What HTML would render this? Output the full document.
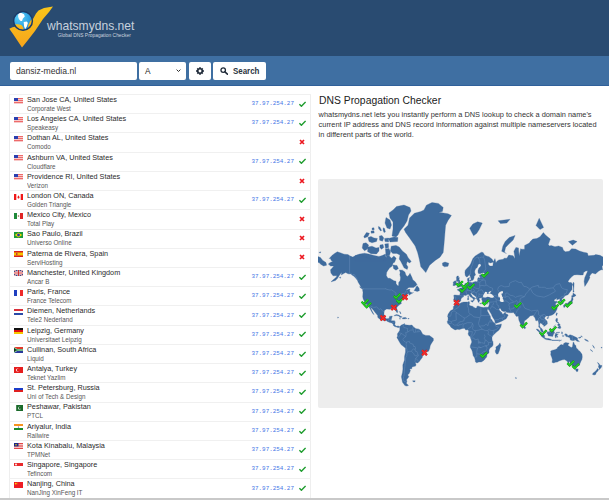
<!DOCTYPE html>
<html><head><meta charset="utf-8"><style>
*{box-sizing:border-box}
html,body{margin:0;padding:0;width:609px;height:500px;overflow:hidden;background:#fff;font-family:"Liberation Sans",sans-serif}
.hdr{position:absolute;left:0;top:0;width:609px;height:56px;background:#294b71}
.band{position:absolute;left:0;top:56px;width:609px;height:30px;background:#3f6fa2;border-bottom:1.5px solid #30609a}
.logo{position:absolute;left:0;top:0}
.brand{position:absolute;left:47.3px;top:19px;font-size:13px;color:rgba(236,241,247,0.82);line-height:14px;white-space:nowrap;transform:scaleX(0.93);transform-origin:0 0}
.tag{position:absolute;left:57.7px;top:32.6px;font-size:4.9px;color:#c9d3df;line-height:6px;white-space:nowrap}
.box{position:absolute;top:62px;height:18px;background:#fff;border-radius:2px}
.inp{left:10px;width:126.5px}
.inp span{position:absolute;left:5.9px;top:4.2px;font-size:8.6px;line-height:10px;color:#333}
.sel{left:139px;width:47px}
.sel span{position:absolute;left:5.9px;top:4.1px;font-size:8.3px;line-height:10px;color:#222}
.gear{left:189px;width:22px}
.srch{left:213px;width:53px}
.srch span{position:absolute;left:20.4px;top:3.6px;font-size:8.3px;font-weight:bold;line-height:10px;color:#2b3440;transform:scaleX(0.955);transform-origin:0 0}
.list{position:absolute;left:9px;top:94px;width:302px;height:410px;border:1px solid #eeeeee;background:#fff}
.row{position:absolute;left:9px;width:302px;height:19.22px;border-top:1px solid #f0f0f0}
.flag{position:absolute;left:5px;top:2.5px;width:9px;height:6px;line-height:0}
.t1{position:absolute;left:17.6px;top:0.9px;font-size:7.4px;line-height:8px;color:#2a2a2a;white-space:nowrap;transform:scaleX(0.982);transform-origin:0 0}
.t2{position:absolute;left:17.6px;top:9.9px;font-size:6.5px;line-height:7px;color:#555;white-space:nowrap;transform:scaleX(0.965);transform-origin:0 0}
.ip{position:absolute;left:242.5px;top:5.2px;font-family:"Liberation Mono",monospace;font-size:5.9px;line-height:7px;color:#4677e6;white-space:nowrap}
.ok{position:absolute;left:290px;top:5.8px;line-height:0}
.no{position:absolute;left:290.3px;top:5.7px;line-height:0}
.bot{position:absolute;left:0;top:498px;width:609px;height:2px;background:#c9c9c9}
h1{position:absolute;left:318.6px;top:95.4px;margin:0;font-weight:normal;font-size:10px;line-height:12px;color:#222;white-space:nowrap;transform:scaleX(1.036);transform-origin:0 0}
.para{position:absolute;left:318.6px;top:109.6px;width:290px;font-size:7.4px;line-height:10.1px;color:#333}
.para div{white-space:nowrap}
.map{position:absolute;left:318px;top:179px;width:285px;height:228.5px;background:#ededed;border-radius:2px;overflow:hidden}
</style></head><body>
<div class="hdr"></div>
<svg class="logo" width="60" height="52" viewBox="0 0 60 52">
<defs><linearGradient id="yg" x1="0" y1="0" x2="0" y2="1"><stop offset="0" stop-color="#f9c51a"/><stop offset="1" stop-color="#f7a51c"/></linearGradient>
<radialGradient id="bg" cx="0.3" cy="0.3" r="0.9"><stop offset="0" stop-color="#5fd0f8"/><stop offset="0.6" stop-color="#2ea3e4"/><stop offset="1" stop-color="#1a6fc0"/></radialGradient></defs>
<path d="M9.3 28.8L12.5 27.2 16 26.5 23 28 30 25 33 19 36 13.5 38.5 10.5 44 8 53 6.5 49 12 43 19 35 31 28 40 22 47.5 17 40 13 34Z" fill="url(#yg)"/>
<circle cx="23" cy="20.9" r="9.3" fill="url(#bg)"/>
<path d="M18.4 13.6L21 12.8 24 14.2 24.8 16.4 22.9 18.6 22 20.9 20.6 20.9 19 19.2 18.1 16.4Z" fill="#fff"/>
<path d="M23.7 22L26.8 21.4 27.9 23.1 26.8 26.5 25.1 29.3 24 26Z" fill="#fff"/>
<path d="M14.2 24.6C16.5 23.9 19.3 23.9 21.3 25.1 22.8 26.1 23.5 27.9 23.7 30 19.5 30 15.8 27.8 14.2 24.6Z" fill="url(#yg)"/>
<path d="M32.4 18.2L32.3 22 30.6 25.6 27.8 28 28.4 24.8 30.2 21.3Z" fill="url(#yg)"/>
<circle cx="23" cy="20.9" r="9.4" fill="none" stroke="#1b3a68" stroke-width="1.5"/>
</svg>
<div class="brand">whatsmydns.net</div>
<div class="tag">Global DNS Propagation Checker</div>
<div class="band"></div>
<div class="box inp"><span>dansiz-media.nl</span></div>
<div class="box sel"><span>A</span><svg style="position:absolute;left:37px;top:7.3px" width="5" height="3" viewBox="0 0 5 3"><path d="M0.6 0.6L2.5 2.5 4.4 0.6" fill="none" stroke="#222" stroke-width="0.95"/></svg></div>
<div class="box gear"><svg style="position:absolute;left:6.8px;top:5.2px" width="8" height="8" viewBox="-8 -8 16 16"><g fill="#1f2a38"><rect x="-1.8" y="-7.6" width="3.6" height="15.2" rx="0.6"/><rect x="-1.8" y="-7.6" width="3.6" height="15.2" rx="0.6" transform="rotate(45)"/><rect x="-1.8" y="-7.6" width="3.6" height="15.2" rx="0.6" transform="rotate(90)"/><rect x="-1.8" y="-7.6" width="3.6" height="15.2" rx="0.6" transform="rotate(135)"/><circle r="5.4"/></g><circle r="2.9" fill="#fff"/></svg></div>
<div class="box srch"><svg style="position:absolute;left:6.6px;top:5.4px" width="8.8" height="7.6" viewBox="0 0 17.6 15.2"><circle cx="6.4" cy="6.2" r="4.5" fill="none" stroke="#1f2a38" stroke-width="2.6"/><path d="M9.9 9.7L14.8 14.3" stroke="#1f2a38" stroke-width="3" stroke-linecap="round"/></svg><span>Search</span></div>
<div class="list"></div>
<div class="row" style="top:94.00px"><div class="flag"><svg class="fl" width="9" height="6" viewBox="0 0 9 6"><rect width="9" height="6" fill="#ee6a6a"/><rect y="1" width="9" height="1" fill="#f7caca"/><rect y="3" width="9" height="1" fill="#f7caca"/><rect y="5" width="9" height="1" fill="#f7caca"/><rect width="4" height="3" fill="#2a3fb0"/></svg></div><div class="t1">San Jose CA, United States</div><div class="t2">Corporate West</div><div class="ip">37.97.254.27</div><div class="ok"><svg class="ic" width="7" height="6" viewBox="0 0 7 6"><path d="M0.4 3.2L2.4 5.2 6.6 0.9" fill="none" stroke="#1f9d2f" stroke-width="1.5"/></svg></div></div><div class="row" style="top:113.22px"><div class="flag"><svg class="fl" width="9" height="6" viewBox="0 0 9 6"><rect width="9" height="6" fill="#ee6a6a"/><rect y="1" width="9" height="1" fill="#f7caca"/><rect y="3" width="9" height="1" fill="#f7caca"/><rect y="5" width="9" height="1" fill="#f7caca"/><rect width="4" height="3" fill="#2a3fb0"/></svg></div><div class="t1">Los Angeles CA, United States</div><div class="t2">Speakeasy</div><div class="ip">37.97.254.27</div><div class="ok"><svg class="ic" width="7" height="6" viewBox="0 0 7 6"><path d="M0.4 3.2L2.4 5.2 6.6 0.9" fill="none" stroke="#1f9d2f" stroke-width="1.5"/></svg></div></div><div class="row" style="top:132.44px"><div class="flag"><svg class="fl" width="9" height="6" viewBox="0 0 9 6"><rect width="9" height="6" fill="#ee6a6a"/><rect y="1" width="9" height="1" fill="#f7caca"/><rect y="3" width="9" height="1" fill="#f7caca"/><rect y="5" width="9" height="1" fill="#f7caca"/><rect width="4" height="3" fill="#2a3fb0"/></svg></div><div class="t1">Dothan AL, United States</div><div class="t2">Comodo</div><div class="no"><svg class="ic" width="6" height="6" viewBox="0 0 6 6"><path d="M1 1L5 5M5 1L1 5" fill="none" stroke="#ec1820" stroke-width="1.7"/></svg></div></div><div class="row" style="top:151.66px"><div class="flag"><svg class="fl" width="9" height="6" viewBox="0 0 9 6"><rect width="9" height="6" fill="#ee6a6a"/><rect y="1" width="9" height="1" fill="#f7caca"/><rect y="3" width="9" height="1" fill="#f7caca"/><rect y="5" width="9" height="1" fill="#f7caca"/><rect width="4" height="3" fill="#2a3fb0"/></svg></div><div class="t1">Ashburn VA, United States</div><div class="t2">Cloudflare</div><div class="ip">37.97.254.27</div><div class="ok"><svg class="ic" width="7" height="6" viewBox="0 0 7 6"><path d="M0.4 3.2L2.4 5.2 6.6 0.9" fill="none" stroke="#1f9d2f" stroke-width="1.5"/></svg></div></div><div class="row" style="top:170.88px"><div class="flag"><svg class="fl" width="9" height="6" viewBox="0 0 9 6"><rect width="9" height="6" fill="#ee6a6a"/><rect y="1" width="9" height="1" fill="#f7caca"/><rect y="3" width="9" height="1" fill="#f7caca"/><rect y="5" width="9" height="1" fill="#f7caca"/><rect width="4" height="3" fill="#2a3fb0"/></svg></div><div class="t1">Providence RI, United States</div><div class="t2">Verizon</div><div class="no"><svg class="ic" width="6" height="6" viewBox="0 0 6 6"><path d="M1 1L5 5M5 1L1 5" fill="none" stroke="#ec1820" stroke-width="1.7"/></svg></div></div><div class="row" style="top:190.10px"><div class="flag"><svg class="fl" width="9" height="6" viewBox="0 0 9 6"><rect width="9" height="6" fill="#fff"/><rect width="2.3" height="6" fill="#f01818"/><rect x="6.7" width="2.3" height="6" fill="#f01818"/><path d="M4.5 1.2L5.6 3.2 5 4.6 4 4.6 3.4 3.2Z" fill="#f01818"/></svg></div><div class="t1">London ON, Canada</div><div class="t2">Golden Triangle</div><div class="ip">37.97.254.27</div><div class="ok"><svg class="ic" width="7" height="6" viewBox="0 0 7 6"><path d="M0.4 3.2L2.4 5.2 6.6 0.9" fill="none" stroke="#1f9d2f" stroke-width="1.5"/></svg></div></div><div class="row" style="top:209.32px"><div class="flag"><svg class="fl" width="9" height="6" viewBox="0 0 9 6"><rect width="3" height="6" fill="#1f8a3a"/><rect x="3" width="3" height="6" fill="#fff"/><rect x="6" width="3" height="6" fill="#e02525"/><circle cx="4.5" cy="3" r="0.8" fill="#8a6a3a"/></svg></div><div class="t1">Mexico City, Mexico</div><div class="t2">Total Play</div><div class="no"><svg class="ic" width="6" height="6" viewBox="0 0 6 6"><path d="M1 1L5 5M5 1L1 5" fill="none" stroke="#ec1820" stroke-width="1.7"/></svg></div></div><div class="row" style="top:228.54px"><div class="flag"><svg class="fl" width="9" height="6" viewBox="0 0 9 6"><rect width="9" height="6" fill="#1c9a3a"/><path d="M4.5 0.6L8.2 3 4.5 5.4 0.8 3Z" fill="#f5d800"/><circle cx="4.5" cy="3" r="1.4" fill="#2233aa"/></svg></div><div class="t1">Sao Paulo, Brazil</div><div class="t2">Universo Online</div><div class="no"><svg class="ic" width="6" height="6" viewBox="0 0 6 6"><path d="M1 1L5 5M5 1L1 5" fill="none" stroke="#ec1820" stroke-width="1.7"/></svg></div></div><div class="row" style="top:247.76px"><div class="flag"><svg class="fl" width="9" height="6" viewBox="0 0 9 6"><rect width="9" height="6" fill="#d81e1e"/><rect y="1.5" width="9" height="3" fill="#f7c400"/><rect x="2" y="2" width="1.5" height="2" fill="#c04040"/></svg></div><div class="t1">Paterna de Rivera, Spain</div><div class="t2">ServiHosting</div><div class="no"><svg class="ic" width="6" height="6" viewBox="0 0 6 6"><path d="M1 1L5 5M5 1L1 5" fill="none" stroke="#ec1820" stroke-width="1.7"/></svg></div></div><div class="row" style="top:266.98px"><div class="flag"><svg class="fl" width="9" height="6" viewBox="0 0 9 6"><rect width="9" height="6" fill="#24347a"/><path d="M0 0L9 6M9 0L0 6" stroke="#fff" stroke-width="1.2"/><path d="M0 0L9 6M9 0L0 6" stroke="#d03030" stroke-width="0.5"/><path d="M4.5 0V6M0 3H9" stroke="#fff" stroke-width="2"/><path d="M4.5 0V6M0 3H9" stroke="#d03030" stroke-width="1.1"/></svg></div><div class="t1">Manchester, United Kingdom</div><div class="t2">Ancar B</div><div class="ip">37.97.254.27</div><div class="ok"><svg class="ic" width="7" height="6" viewBox="0 0 7 6"><path d="M0.4 3.2L2.4 5.2 6.6 0.9" fill="none" stroke="#1f9d2f" stroke-width="1.5"/></svg></div></div><div class="row" style="top:286.20px"><div class="flag"><svg class="fl" width="9" height="6" viewBox="0 0 9 6"><rect width="3" height="6" fill="#1f3fc0"/><rect x="3" width="3" height="6" fill="#fff"/><rect x="6" width="3" height="6" fill="#ee2a2a"/></svg></div><div class="t1">Paris, France</div><div class="t2">France Telecom</div><div class="ip">37.97.254.27</div><div class="ok"><svg class="ic" width="7" height="6" viewBox="0 0 7 6"><path d="M0.4 3.2L2.4 5.2 6.6 0.9" fill="none" stroke="#1f9d2f" stroke-width="1.5"/></svg></div></div><div class="row" style="top:305.42px"><div class="flag"><svg class="fl" width="9" height="6" viewBox="0 0 9 6"><rect width="9" height="2" fill="#d8303a"/><rect y="2" width="9" height="2" fill="#fff"/><rect y="4" width="9" height="2" fill="#2a4aa8"/></svg></div><div class="t1">Diemen, Netherlands</div><div class="t2">Tele2 Nederland</div><div class="ip">37.97.254.27</div><div class="ok"><svg class="ic" width="7" height="6" viewBox="0 0 7 6"><path d="M0.4 3.2L2.4 5.2 6.6 0.9" fill="none" stroke="#1f9d2f" stroke-width="1.5"/></svg></div></div><div class="row" style="top:324.64px"><div class="flag"><svg class="fl" width="9" height="6" viewBox="0 0 9 6"><rect width="9" height="2" fill="#111"/><rect y="2" width="9" height="2" fill="#e01010"/><rect y="4" width="9" height="2" fill="#f8c800"/></svg></div><div class="t1">Leipzig, Germany</div><div class="t2">Universitaet Leipzig</div><div class="ip">37.97.254.27</div><div class="ok"><svg class="ic" width="7" height="6" viewBox="0 0 7 6"><path d="M0.4 3.2L2.4 5.2 6.6 0.9" fill="none" stroke="#1f9d2f" stroke-width="1.5"/></svg></div></div><div class="row" style="top:343.86px"><div class="flag"><svg class="fl" width="9" height="6" viewBox="0 0 9 6"><rect width="9" height="3" fill="#e03a2a"/><rect y="3" width="9" height="3" fill="#2a3a9a"/><path d="M0 0L4.5 3 0 6Z" fill="#fff"/><rect x="2" y="2" width="7" height="2" fill="#fff"/><path d="M0 0.6L3.8 3 0 5.4Z" fill="#1a8a3a"/><rect x="3" y="2.4" width="6" height="1.2" fill="#1a8a3a"/><path d="M0 1.6L2.3 3 0 4.4Z" fill="#222"/></svg></div><div class="t1">Cullinan, South Africa</div><div class="t2">Liquid</div><div class="ip">37.97.254.27</div><div class="ok"><svg class="ic" width="7" height="6" viewBox="0 0 7 6"><path d="M0.4 3.2L2.4 5.2 6.6 0.9" fill="none" stroke="#1f9d2f" stroke-width="1.5"/></svg></div></div><div class="row" style="top:363.08px"><div class="flag"><svg class="fl" width="9" height="6" viewBox="0 0 9 6"><rect width="9" height="6" fill="#e61e1e"/><circle cx="3.6" cy="3" r="1.6" fill="#fff"/><circle cx="4.1" cy="3" r="1.3" fill="#e61e1e"/></svg></div><div class="t1">Antalya, Turkey</div><div class="t2">Teknet Yazlim</div><div class="ip">37.97.254.27</div><div class="ok"><svg class="ic" width="7" height="6" viewBox="0 0 7 6"><path d="M0.4 3.2L2.4 5.2 6.6 0.9" fill="none" stroke="#1f9d2f" stroke-width="1.5"/></svg></div></div><div class="row" style="top:382.30px"><div class="flag"><svg class="fl" width="9" height="6" viewBox="0 0 9 6"><rect width="9" height="2" fill="#fff"/><rect y="2" width="9" height="2" fill="#1c3cc8"/><rect y="4" width="9" height="2" fill="#e02020"/></svg></div><div class="t1">St. Petersburg, Russia</div><div class="t2">Uni of Tech &amp; Design</div><div class="ip">37.97.254.27</div><div class="ok"><svg class="ic" width="7" height="6" viewBox="0 0 7 6"><path d="M0.4 3.2L2.4 5.2 6.6 0.9" fill="none" stroke="#1f9d2f" stroke-width="1.5"/></svg></div></div><div class="row" style="top:401.52px"><div class="flag"><svg class="fl" width="9" height="6" viewBox="0 0 9 6"><rect width="9" height="6" fill="#1a6a2a"/><rect width="2.2" height="6" fill="#fff"/><circle cx="5.5" cy="3" r="1.5" fill="#fff"/><circle cx="5.9" cy="2.7" r="1.3" fill="#1a6a2a"/></svg></div><div class="t1">Peshawar, Pakistan</div><div class="t2">PTCL</div><div class="ip">37.97.254.27</div><div class="ok"><svg class="ic" width="7" height="6" viewBox="0 0 7 6"><path d="M0.4 3.2L2.4 5.2 6.6 0.9" fill="none" stroke="#1f9d2f" stroke-width="1.5"/></svg></div></div><div class="row" style="top:420.74px"><div class="flag"><svg class="fl" width="9" height="6" viewBox="0 0 9 6"><rect width="9" height="2" fill="#f7931e"/><rect y="2" width="9" height="2" fill="#fff"/><rect y="4" width="9" height="2" fill="#1a8a2a"/><circle cx="4.5" cy="3" r="0.6" fill="#2a2a8a"/></svg></div><div class="t1">Ariyalur, India</div><div class="t2">Railwire</div><div class="ip">37.97.254.27</div><div class="ok"><svg class="ic" width="7" height="6" viewBox="0 0 7 6"><path d="M0.4 3.2L2.4 5.2 6.6 0.9" fill="none" stroke="#1f9d2f" stroke-width="1.5"/></svg></div></div><div class="row" style="top:439.96px"><div class="flag"><svg class="fl" width="9" height="6" viewBox="0 0 9 6"><rect width="9" height="6" fill="#fff"/><rect y="0" width="9" height="0.9" fill="#dd3333"/><rect y="1.7" width="9" height="0.9" fill="#dd3333"/><rect y="3.4" width="9" height="0.9" fill="#dd3333"/><rect y="5.1" width="9" height="0.9" fill="#dd3333"/><rect width="4.5" height="3.4" fill="#1a2a8a"/><circle cx="2" cy="1.7" r="0.8" fill="#f5d000"/></svg></div><div class="t1">Kota Kinabalu, Malaysia</div><div class="t2">TPMNet</div><div class="ip">37.97.254.27</div><div class="ok"><svg class="ic" width="7" height="6" viewBox="0 0 7 6"><path d="M0.4 3.2L2.4 5.2 6.6 0.9" fill="none" stroke="#1f9d2f" stroke-width="1.5"/></svg></div></div><div class="row" style="top:459.18px"><div class="flag"><svg class="fl" width="9" height="6" viewBox="0 0 9 6"><rect width="9" height="3" fill="#e8282a"/><rect y="3" width="9" height="3" fill="#fff"/><circle cx="2" cy="1.5" r="0.9" fill="#fff"/></svg></div><div class="t1">Singapore, Singapore</div><div class="t2">Tefincom</div><div class="ip">37.97.254.27</div><div class="ok"><svg class="ic" width="7" height="6" viewBox="0 0 7 6"><path d="M0.4 3.2L2.4 5.2 6.6 0.9" fill="none" stroke="#1f9d2f" stroke-width="1.5"/></svg></div></div><div class="row" style="top:478.40px"><div class="flag"><svg class="fl" width="9" height="6" viewBox="0 0 9 6"><rect width="9" height="6" fill="#ee1c25"/><circle cx="1.8" cy="1.6" r="0.9" fill="#ffde00"/><circle cx="3.5" cy="0.9" r="0.3" fill="#ffde00"/><circle cx="3.9" cy="2" r="0.3" fill="#ffde00"/></svg></div><div class="t1">Nanjing, China</div><div class="t2">NanJing XinFeng IT</div><div class="ip">37.97.254.27</div><div class="ok"><svg class="ic" width="7" height="6" viewBox="0 0 7 6"><path d="M0.4 3.2L2.4 5.2 6.6 0.9" fill="none" stroke="#1f9d2f" stroke-width="1.5"/></svg></div></div>
<h1>DNS Propagation Checker</h1>
<div class="para"><div>whatsmydns.net lets you instantly perform a DNS lookup to check a domain name's</div><div>current IP address and DNS record information against multiple nameservers located</div><div>in different parts of the world.</div></div>
<div class="map"><svg width="285" height="229" viewBox="0 0 285 229" style="position:absolute;left:0;top:0"><path d="M10.3 85.1 11.9 83.7 13.4 83.1 15.0 82.5 13.7 82.1 12.3 79.6 11.2 79.5 14.2 76.3 16.6 74.4 19.3 72.8 22.9 74.0 26.1 75.2 30.0 75.6 31.6 76.8 34.8 78.1 37.1 76.8 41.1 75.9 44.2 77.0 48.2 78.1 52.1 79.6 56.1 80.3 60.1 79.2 65.6 80.7 68.3 78.3 68.7 71.5 70.3 75.9 73.5 79.2 75.9 77.0 78.2 79.2 76.6 83.3 75.1 83.9 74.3 87.1 71.5 88.9 68.7 93.2 68.3 96.4 69.9 99.3 71.9 99.3 75.9 101.7 78.0 102.2 78.1 104.8 79.8 106.8 80.6 106.8 80.7 103.5 82.2 101.5 82.5 98.6 81.8 95.6 82.2 93.5 81.4 90.9 84.5 91.2 86.9 93.0 88.1 96.4 89.7 97.4 91.6 95.1 92.0 94.3 94.0 98.6 94.8 100.8 97.2 102.8 99.0 105.5 98.0 106.8 95.6 108.4 90.9 108.4 87.7 111.1 92.0 110.1 91.6 111.7 92.0 113.0 94.8 113.9 95.6 113.4 92.8 115.1 90.9 116.2 90.9 114.5 89.7 115.1 87.7 115.9 87.2 117.1 87.7 118.0 86.5 118.5 84.5 119.2 84.5 120.4 83.4 121.4 83.0 122.9 83.4 124.6 82.2 125.3 80.6 126.6 79.0 127.9 78.6 129.5 79.4 131.3 79.8 132.7 79.4 133.8 78.6 133.3 77.7 131.6 77.0 130.0 75.9 129.8 73.5 129.1 72.3 130.2 71.1 130.3 68.7 129.9 66.4 131.5 66.0 133.6 66.0 136.2 67.2 138.7 68.3 139.8 71.1 139.4 71.5 137.4 74.3 137.0 73.6 139.5 73.1 141.8 76.6 141.8 77.2 143.2 76.8 145.7 78.2 147.3 80.2 146.9 81.8 147.7 81.0 148.5 79.8 148.6 78.5 148.1 77.0 147.7 75.3 146.5 75.1 145.3 73.9 144.0 71.9 143.5 69.9 142.8 68.3 141.6 66.4 141.8 64.0 140.8 61.2 139.7 59.7 138.3 59.7 136.6 58.5 134.9 56.9 133.3 55.7 131.5 53.9 129.5 52.4 128.1 52.9 129.5 54.5 132.7 56.1 135.7 54.5 134.2 52.9 131.3 52.1 129.7 50.6 127.2 49.4 125.8 47.7 125.2 46.7 123.3 46.2 122.1 45.2 120.1 44.7 117.8 45.0 113.4 44.5 110.6 45.8 110.5 45.0 109.3 42.7 107.7 41.9 106.1 40.3 103.5 39.5 101.5 37.9 99.3 35.6 97.1 32.8 95.1 30.0 94.8 27.7 93.5 26.1 94.3 23.3 95.9 23.6 93.2 21.3 96.4 19.4 99.6 17.4 101.5 15.0 102.2 13.0 102.8 15.8 100.3 18.2 98.2 19.0 96.7 15.0 96.8 12.9 94.0 12.5 90.7 13.8 89.6 15.8 87.1 12.6 87.1ZM96.0 111.5 99.2 112.5 101.4 111.7 101.1 109.3 99.2 106.8 98.1 108.0 97.2 109.9ZM151.7 49.3 154.9 45.0 159.6 42.8 164.3 44.1 161.2 50.5 158.8 54.3 155.6 56.8 153.7 53.2ZM81.8 147.6 83.4 146.1 85.3 145.3 86.5 144.6 86.9 145.7 89.3 146.1 91.6 146.3 94.0 146.0 95.2 147.7 98.0 149.7 100.3 149.9 102.3 151.0 103.5 153.0 104.7 155.2 107.8 156.4 111.4 156.6 113.8 158.2 115.4 159.5 115.4 161.5 113.4 164.4 112.2 166.8 111.8 169.3 110.6 172.2 108.2 173.1 105.9 174.4 104.7 176.6 104.3 178.4 102.7 180.6 101.1 182.8 99.6 183.9 97.2 183.5 98.0 185.4 97.6 187.1 94.0 187.9 93.8 189.8 91.6 190.0 92.4 191.6 91.3 194.3 89.7 196.0 90.9 197.7 88.5 200.8 89.0 203.0 88.1 204.0 90.5 206.4 88.9 207.1 86.9 206.6 84.5 203.3 83.4 197.7 84.5 193.2 84.9 190.0 84.8 185.9 86.5 181.1 86.5 177.5 87.5 173.1 87.5 169.3 86.1 168.0 83.0 165.6 81.0 162.3 79.8 159.9 78.9 158.8 79.6 157.0 79.4 155.2 79.8 154.0 80.6 153.2 81.8 151.2 81.8 148.9ZM138.6 123.9 139.4 123.2 141.4 123.2 142.4 122.3 143.0 121.1 142.8 120.4 143.7 118.8 145.5 117.8 145.4 116.6 146.6 116.3 148.1 116.6 148.9 115.8 150.0 115.2 151.1 115.7 151.7 117.2 152.7 118.1 154.1 118.8 155.3 119.9 155.6 121.2 155.4 121.9 155.8 121.9 156.5 120.6 156.3 119.5 157.6 119.8 157.2 119.1 155.6 118.3 154.1 117.2 153.7 116.1 152.7 115.1 152.8 114.1 153.8 113.7 153.7 114.5 155.0 115.4 156.0 116.3 157.6 117.4 158.3 118.0 158.3 119.6 159.0 120.4 159.7 121.6 160.1 123.1 160.9 123.4 161.3 121.9 162.0 121.7 160.9 119.7 161.9 119.1 163.7 119.0 163.9 119.7 163.7 120.5 164.2 121.4 164.6 122.9 165.4 123.2 167.2 123.2 168.7 123.8 170.3 123.1 171.4 123.7 171.3 124.9 171.0 126.3 170.6 127.4 170.1 128.3 170.6 130.0 171.8 132.7 173.4 135.3 174.0 137.0 175.2 139.1 176.6 141.2 177.1 143.6 177.4 144.3 178.6 144.2 181.4 143.2 184.2 141.9 186.7 140.6 187.8 139.9 188.7 139.1 189.2 137.8 190.2 136.2 189.4 135.2 188.0 134.9 187.5 134.1 187.5 132.9 186.8 133.6 185.7 134.7 184.1 134.9 183.7 133.6 183.3 133.1 182.9 133.8 182.7 132.6 181.4 131.3 180.9 129.8 181.6 129.5 182.5 129.4 183.5 131.4 185.3 132.4 186.8 132.5 188.0 132.2 188.3 133.3 190.0 133.6 191.7 133.8 193.6 133.7 195.6 133.6 196.2 134.6 197.4 135.7 198.3 136.0 197.5 136.4 198.5 137.5 200.3 137.0 200.5 138.7 200.9 141.2 201.8 143.2 202.6 145.3 203.4 147.3 204.2 148.0 204.9 147.3 205.6 146.2 206.1 144.4 206.4 142.0 208.0 140.8 209.8 139.3 211.3 138.0 211.7 137.0 213.3 136.7 214.5 136.4 215.5 136.2 215.9 137.6 216.9 138.7 217.5 140.4 217.7 141.6 218.4 141.8 220.0 141.2 220.3 142.4 220.8 144.0 220.8 146.5 220.7 148.1 222.2 149.3 222.6 151.2 223.0 152.2 224.8 153.4 225.3 153.1 224.7 151.0 223.7 149.5 222.3 148.5 221.6 147.0 221.4 146.0 222.0 144.4 222.1 143.7 222.8 144.3 224.0 144.7 224.6 145.8 225.8 146.2 225.8 147.4 227.1 146.8 227.9 146.1 229.3 145.1 229.3 143.6 229.0 142.0 227.5 140.8 226.5 139.3 227.1 138.1 228.2 137.0 229.5 137.0 230.3 137.8 230.7 137.0 232.7 136.4 234.2 135.9 235.8 134.9 237.4 133.3 238.2 131.8 239.1 130.0 239.2 128.6 238.4 127.1 237.4 125.3 238.0 123.9 239.8 122.9 238.6 122.2 236.9 122.4 236.2 121.4 235.9 120.9 237.0 120.4 239.0 119.0 238.7 120.9 239.6 120.4 241.2 120.0 242.0 120.5 241.6 121.9 242.7 122.4 242.9 124.9 243.7 125.2 245.1 124.6 245.3 123.1 244.5 121.5 243.7 120.1 245.5 118.8 246.3 117.5 247.7 116.5 250.0 115.7 252.4 112.5 254.0 110.5 254.0 107.4 254.7 105.2 253.2 103.5 251.2 103.5 249.9 102.4 251.6 100.1 254.0 97.4 256.0 95.9 259.1 95.7 262.7 96.0 265.1 95.9 265.6 93.5 267.8 91.9 269.6 91.7 269.2 93.2 266.8 98.6 266.1 102.2 266.8 107.4 268.1 105.4 269.4 103.5 271.0 100.5 272.0 98.2 271.4 97.6 273.1 95.0 274.4 94.0 277.5 95.0 279.3 93.2 280.9 91.9 283.2 90.7 284.6 91.0 284.0 87.0 287.6 85.3 293.1 84.3 291.5 82.3 289.1 81.3 286.8 78.6 285.2 78.1 282.0 76.3 277.7 75.6 276.1 76.3 270.2 76.8 269.4 74.0 265.5 73.2 261.5 72.0 257.5 70.0 253.6 69.7 251.2 72.3 247.3 72.8 245.3 71.0 244.5 68.4 240.6 67.0 237.0 67.8 233.1 66.4 231.5 67.0 230.3 65.6 232.3 60.1 227.5 56.1 225.4 53.6 222.0 57.8 218.8 59.5 214.9 60.1 212.5 62.3 211.3 64.1 206.6 66.4 206.6 70.2 203.8 70.2 202.6 69.7 201.1 77.0 200.5 68.9 197.9 68.4 195.9 72.3 197.1 79.8 195.1 76.8 190.8 76.1 188.8 79.2 186.1 79.2 185.3 80.3 180.9 80.9 179.3 81.9 177.9 83.7 177.0 79.6 175.4 82.7 174.8 87.0 171.8 87.1 170.3 85.3 170.4 83.3 172.6 83.9 175.5 82.9 174.2 80.3 171.0 77.7 169.1 77.2 166.7 76.3 165.1 73.5 163.3 73.2 159.6 75.4 157.2 77.0 154.9 79.6 153.7 82.3 152.7 84.7 151.3 87.1 149.3 89.1 147.3 91.2 146.9 93.2 147.1 95.6 147.5 97.0 148.5 97.9 149.5 97.7 150.7 96.4 151.4 95.0 151.7 96.4 152.3 97.6 153.0 100.1 153.2 101.6 154.3 101.5 155.6 100.3 156.1 98.5 156.1 97.3 157.6 95.9 156.8 93.8 156.7 91.9 157.6 89.8 159.2 88.4 160.4 85.3 162.0 84.7 163.1 86.0 162.8 87.1 160.8 89.3 160.0 91.5 160.0 93.2 160.5 94.5 162.0 94.8 163.9 94.0 165.5 93.8 166.9 95.0 165.3 95.6 163.5 95.6 161.6 96.0 161.6 97.4 162.2 98.2 162.1 99.2 160.1 98.7 159.6 100.1 159.7 101.9 158.7 102.8 157.6 102.6 155.6 103.1 154.2 103.7 152.5 103.3 151.7 103.5 151.1 102.8 151.1 100.5 151.4 98.2 150.5 99.2 149.8 99.2 149.4 100.1 149.5 101.5 149.8 102.3 150.0 103.5 149.5 104.2 148.5 104.3 146.9 104.6 146.7 105.5 145.8 106.8 145.0 107.3 144.3 107.5 144.3 108.4 143.2 109.0 142.0 109.1 141.5 109.0 141.8 110.4 140.6 110.1 139.3 110.6 139.6 111.3 141.0 112.0 142.1 113.2 142.1 115.1 141.6 116.3 139.8 116.3 136.7 115.9 135.7 116.5 136.0 118.0 136.0 119.4 135.5 121.1 136.0 121.4 136.0 122.9 137.1 122.7 138.0 123.1ZM138.3 124.1 141.3 124.8 143.8 123.4 145.8 123.1 149.7 123.0 150.9 122.6 151.7 123.0 151.2 123.9 151.8 124.7 151.1 125.6 152.1 126.7 153.3 126.9 155.1 127.5 155.5 128.3 158.0 129.3 158.9 128.6 158.8 127.6 160.0 126.9 161.3 127.5 162.9 128.1 165.5 128.6 167.1 128.2 168.5 128.3 170.1 128.3 170.6 130.0 170.1 131.3 168.8 129.6 169.5 132.2 171.0 134.9 172.4 137.4 172.6 139.5 173.6 140.4 174.4 142.0 175.6 143.2 177.2 144.4 177.1 145.3 178.2 146.1 179.7 145.8 181.3 145.5 183.4 144.9 183.3 146.1 182.9 148.1 181.7 150.0 180.5 151.6 178.2 153.2 176.0 155.6 174.8 156.6 174.0 158.2 174.0 159.9 174.2 161.5 175.0 162.7 175.1 166.0 174.2 167.6 172.1 168.9 171.0 171.0 171.0 172.6 171.0 173.9 169.1 175.2 169.0 176.1 168.7 178.1 167.5 179.3 166.7 180.5 165.1 181.9 163.3 183.0 160.8 183.0 158.8 183.8 157.5 183.0 157.2 181.1 156.6 178.8 155.1 176.6 154.5 173.1 153.8 171.0 152.3 168.4 152.3 166.8 152.9 165.2 153.8 163.1 153.3 161.1 152.6 159.1 152.5 158.0 150.7 156.4 150.1 154.8 150.5 153.6 150.7 152.0 150.3 151.2 149.7 150.8 147.7 151.0 146.9 149.8 146.3 149.3 144.6 149.4 141.4 150.6 139.4 150.3 137.1 150.9 135.5 150.0 133.9 148.9 132.7 148.1 132.3 146.9 131.1 145.8 129.8 144.5 129.2 142.7 130.0 141.2 130.1 138.8 129.6 137.4 130.1 135.3 131.5 133.1 132.7 131.6 135.1 130.4 135.4 129.1 135.3 127.7 136.3 126.5 137.6 125.8 138.1 124.6ZM181.9 163.9 182.9 166.6 182.3 168.0 181.6 171.0 180.6 173.5 180.1 174.8 178.7 175.2 177.5 173.5 177.2 171.8 178.1 170.1 177.8 168.0 179.3 167.0 180.8 165.8ZM138.5 108.5 140.2 108.2 142.2 107.8 144.1 107.2 144.3 105.4 143.2 104.3 142.8 103.4 142.0 102.7 141.6 101.0 141.0 100.8 141.4 98.6 140.1 98.5 140.6 97.0 139.1 97.0 138.4 98.6 138.6 100.3 138.3 101.7 139.2 102.4 140.5 102.3 140.2 103.5 140.7 104.5 139.3 104.5 139.7 105.8 138.9 106.5 140.4 106.9 139.4 107.4ZM138.3 106.0 138.1 104.1 138.6 102.7 137.2 101.7 136.3 102.3 135.1 103.3 135.4 104.8 134.9 106.4 136.3 106.7 137.9 105.9ZM246.4 125.8 247.7 124.4 249.8 124.2 251.1 122.6 252.4 122.3 253.6 120.1 253.6 118.6 254.8 118.5 255.1 120.4 254.4 121.9 254.2 123.4 254.2 124.7 253.4 124.9 252.6 125.2 251.2 125.2 250.4 126.3 249.6 125.5 248.5 125.5 247.2 125.9ZM245.5 126.3 246.7 125.9 247.2 127.2 246.6 128.3 245.9 128.4 245.5 127.0ZM247.7 126.5 249.3 125.6 249.4 126.5 248.1 126.9ZM253.6 117.8 254.5 118.3 256.1 117.8 258.1 116.4 257.2 115.5 255.0 114.1 254.8 116.4 253.8 116.5ZM255.0 113.3 256.1 112.8 255.6 111.1 256.0 107.4 256.1 104.2 255.4 103.1 254.9 105.5 255.3 109.3ZM237.9 135.7 238.6 133.8 239.4 134.0 238.8 136.2 238.4 136.7ZM228.8 138.9 230.1 138.2 230.7 138.6 230.1 139.6 229.1 139.5ZM206.0 146.6 207.0 147.7 207.7 148.7 207.2 149.5 206.3 149.7 206.0 148.5ZM238.2 139.5 239.5 139.5 239.6 141.2 239.1 142.4 241.0 144.0 240.6 144.3 239.0 143.4 238.2 142.8 237.6 141.3ZM239.4 148.9 240.6 147.6 242.1 146.6 242.9 148.5 242.1 149.8 241.0 149.3ZM239.8 145.3 241.0 144.4 242.1 145.5 241.8 146.5 240.6 146.9 239.6 146.3ZM235.6 147.8 237.4 146.1 237.6 145.7 235.8 147.9ZM229.1 153.2 229.6 152.8 230.7 153.1 232.3 151.9 234.2 150.4 235.4 148.9 237.2 150.2 236.2 151.0 236.0 153.6 237.0 153.7 235.8 154.4 235.0 156.4 234.6 157.6 233.5 157.3 231.1 157.0 230.1 156.7 229.9 155.6 229.1 154.4ZM218.3 150.0 220.0 150.3 222.2 152.4 224.9 155.2 226.6 156.4 226.7 159.0 225.6 159.1 223.6 157.6 222.2 155.2 221.0 153.1 219.2 151.5ZM226.1 159.8 227.0 159.1 228.7 159.5 230.5 159.5 232.0 159.9 233.5 160.6 233.4 161.3 230.7 160.9 228.3 160.6 226.3 159.8ZM233.9 160.9 237.0 161.0 240.2 160.9 241.8 161.1 240.2 161.5 237.0 161.5 233.9 161.5ZM241.0 162.3 243.6 161.1 241.8 161.5ZM237.4 158.8 238.2 158.8 238.2 156.6 239.0 158.1 240.0 158.2 238.8 155.9 240.4 155.1 238.6 155.0 238.0 154.1 241.4 153.6 241.8 153.1 238.4 153.4 237.6 154.4 236.9 156.6ZM246.5 155.4 247.7 154.7 249.0 155.2 250.0 157.0 252.0 155.7 254.4 156.5 257.5 158.0 259.5 159.1 259.5 160.7 261.5 162.6 259.1 162.3 256.8 160.6 256.4 161.5 254.4 161.6 252.4 161.0 251.9 158.8 249.6 157.8 248.1 157.6 247.3 156.8 247.8 156.2 246.6 155.6ZM260.3 158.8 263.1 157.7 262.7 158.8 261.1 159.3ZM255.6 162.9 256.4 165.2 257.8 166.4 258.3 168.9 259.5 170.1 260.7 171.4 262.1 172.6 264.0 175.2 264.3 178.0 263.9 180.6 263.1 182.0 261.7 185.2 261.4 186.4 259.8 186.8 258.6 188.0 257.2 187.1 256.4 187.7 254.2 186.9 253.2 184.9 252.1 184.5 251.9 181.9 250.6 183.9 250.0 183.8 249.0 181.9 246.6 180.6 244.5 180.8 242.5 181.4 241.0 182.0 239.4 183.0 237.4 183.2 235.8 184.0 233.9 183.3 234.2 182.5 234.4 180.6 233.8 178.4 232.7 175.7 232.9 173.5 232.7 172.1 234.6 171.2 236.6 170.7 239.0 169.7 239.8 168.0 241.0 167.5 242.1 166.0 243.6 165.5 245.3 166.2 245.5 164.8 246.5 164.1 247.7 163.5 250.0 163.9 251.2 164.1 250.3 165.2 250.0 166.4 251.6 167.5 253.2 168.4 254.4 167.9 254.9 164.8 255.1 163.5ZM257.2 189.7 260.2 189.9 259.9 192.3 258.7 192.7 257.7 191.3ZM279.4 183.4 280.9 184.4 282.0 186.2 284.0 186.6 283.5 188.1 282.4 189.4 281.4 190.6 280.9 188.7 280.3 188.1 280.9 185.9ZM279.4 189.4 280.7 190.5 279.9 192.1 278.2 193.7 277.7 195.4 276.1 196.1 274.5 195.4 274.9 194.3 277.7 192.1 278.9 190.5ZM75.9 136.7 78.2 135.6 80.6 135.9 82.6 137.3 84.4 138.1 81.8 138.4 81.0 137.0 78.6 136.6 76.6 136.8ZM84.2 139.4 85.7 138.4 87.7 138.5 89.0 139.4 87.3 139.8 86.1 139.9 84.2 139.8ZM81.1 139.6 82.7 139.8 82.2 140.1ZM89.9 139.5 91.2 139.6 91.0 139.9 89.9 139.9ZM183.7 72.3 184.9 67.0 187.2 62.6 191.2 58.5 197.1 56.4 195.1 61.1 190.4 65.6 187.6 68.4 186.4 73.5 188.4 74.4ZM218.0 46.4 221.2 39.3 225.6 48.5 222.0 50.5ZM250.4 62.6 255.2 61.1 259.1 62.6 254.4 66.2ZM180.1 41.8 192.0 40.3 188.8 44.1 182.5 44.6ZM0.9 73.5 2.8 72.8 2.4 74.0ZM41.6 107.7 44.2 108.7 45.6 110.6 44.2 110.1 42.3 108.7ZM21.3 98.6 22.7 97.9 22.5 99.3ZM152.8 121.8 155.3 121.6 154.9 123.2 152.9 122.3ZM149.6 118.8 150.7 118.8 150.6 120.9 149.6 121.0ZM149.8 116.8 150.4 116.7 150.5 118.4 149.9 118.2ZM161.6 124.3 163.8 124.6 162.4 124.9ZM168.5 124.9 170.3 124.3 169.1 125.2ZM151.7 101.5 153.0 100.8 152.8 102.2 151.8 101.9ZM150.8 101.5 151.5 101.7 151.3 102.2ZM197.4 198.4 198.7 198.9 197.9 199.7ZM94.6 201.8 97.2 201.8 96.8 202.9 95.2 202.8ZM19.6 138.0 20.6 138.4 19.9 139.2ZM272.6 170.6 274.9 172.4 274.5 172.6 272.4 171.0ZM266.6 159.9 269.0 160.9 270.6 162.2 269.4 162.3 267.0 161.1ZM274.5 166.2 275.7 167.2 276.5 169.3 276.0 168.9 274.7 166.8ZM283.1 168.4 284.1 168.3 283.9 169.1 283.0 168.9ZM263.3 156.8 262.9 156.9 264.3 158.2 264.1 157.6ZM243.7 152.8 244.5 153.2 244.1 154.4 244.8 155.0 243.7 154.8 243.6 153.6ZM244.1 156.8 246.3 156.8 245.7 157.2 244.4 157.2ZM81.4 132.6 82.2 132.7 81.8 134.0 83.0 134.9 82.6 133.6ZM106.0 31.0 108.4 26.2 114.0 23.6 120.4 24.4 125.2 28.4 124.4 32.4 120.8 33.2 130.0 34.8 133.4 36.4 130.0 41.4 127.6 46.2 126.8 55.8 126.0 65.4 125.2 73.4 122.0 78.2 117.2 81.4 111.6 86.2 107.8 93.6 102.8 87.8 101.2 79.8 99.6 73.4 97.2 67.0 91.6 59.0 87.6 53.4 86.0 50.2 90.0 46.2 91.6 39.0 96.4 34.2 102.8 32.6ZM78.5 27.5 86.0 26.0 92.0 28.5 93.0 32.0 90.5 36.0 89.0 42.0 86.0 47.0 82.0 52.0 80.0 56.0 78.0 58.0 74.0 57.0 75.0 50.0 75.0 43.0 72.0 39.0 71.0 34.0 75.0 31.0ZM68.0 38.5 72.0 41.0 73.5 46.0 72.0 50.0 69.0 49.0 67.0 44.0ZM70.5 59.5 76.0 58.0 80.0 58.5 79.5 62.5 72.0 63.0ZM73.2 67.2 78.0 66.4 81.2 68.0 84.4 72.0 88.4 75.2 90.0 78.4 93.2 82.4 91.6 84.0 89.2 82.4 88.4 85.6 90.0 88.0 89.2 90.4 86.0 88.8 84.4 85.6 82.8 82.4 81.2 80.0 82.0 76.0 78.8 74.4 74.8 74.4 72.4 72.0ZM75.0 86.0 79.0 86.5 80.4 89.5 78.0 91.2 75.5 89.5ZM124.4 84.0 127.0 83.0 130.8 84.2 130.0 87.2 126.5 87.8 124.6 86.5ZM60.4 47.4 62.0 48.2 63.6 51.4 62.6 52.0 60.6 49.6ZM65.2 48.8 66.6 49.6 67.4 53.0 66.0 53.4 65.0 51.0ZM54.0 49.0 56.0 48.8 56.2 50.8 54.2 51.0ZM53.0 52.0 56.0 51.8 56.2 54.0 53.2 54.2ZM48.5 53.6 51.4 54.2 50.0 57.5 46.5 59.0 45.8 57.5ZM50.0 58.5 53.0 57.4 56.0 59.0 59.4 59.5 58.5 62.5 54.0 63.8 51.0 62.5ZM61.4 57.0 64.0 56.6 65.8 59.0 64.5 62.2 61.6 61.2ZM66.6 59.4 70.6 59.0 70.6 63.0 67.0 62.6ZM45.0 64.5 48.0 63.8 50.6 66.0 49.5 70.0 46.5 71.8 44.2 69.0ZM50.0 68.0 54.0 67.2 58.0 69.0 61.0 68.5 61.0 72.0 58.5 75.0 53.0 74.8 49.5 72.5ZM62.0 66.0 65.0 65.4 65.8 68.5 63.5 70.2 61.8 68.5ZM66.8 65.0 70.4 64.6 70.6 68.5 67.5 69.4ZM67.4 70.0 71.0 69.6 72.5 73.0 71.5 76.6 68.0 76.8ZM37.0 76.6 41.8 75.0 46.6 74.2 50.6 75.0 56.2 76.6 61.0 77.4 64.2 76.6 67.4 75.0 68.0 79.0 68.0 82.0 37.0 82.0ZM-1.0 77.3 2.4 78.4 4.8 81.4 8.0 83.6 8.6 86.2 5.6 87.0 3.0 85.4 1.0 83.6 -1.0 83.2Z" fill="#3e6b9d" stroke="#3e6b9d" stroke-width="0.3" stroke-linejoin="round"/><path d="M165.9 118.6 167.9 118.6 169.5 117.8 171.0 118.1 173.0 118.8 174.6 118.8 175.8 118.3 175.9 117.2 174.2 115.6 172.6 114.8 171.8 114.2 170.6 114.5 169.5 115.1 168.7 114.1 169.5 113.4 167.9 112.7 167.1 113.0 166.4 114.2 165.6 115.4 165.0 116.9 165.1 118.3ZM170.6 113.9 171.9 114.1 173.4 112.5 172.6 112.2 170.6 113.0ZM180.1 115.1 180.3 118.3 181.4 118.0 182.1 119.6 181.9 120.9 181.6 121.9 182.3 122.6 183.7 123.1 185.6 123.0 185.6 121.1 184.7 119.4 184.9 117.9 184.4 118.0 183.3 114.7 184.9 114.2 185.0 112.2 183.3 112.2 181.9 112.9 180.9 113.7 180.5 114.5Z" fill="#ededed"/><path d="M45.6 109.9 67.8 109.9 67.8 109.4 68.1 110.2 72.2 111.1 73.2 110.7 75.9 112.4 76.6 112.8 77.9 114.2 77.8 116.7 77.4 117.7 77.8 118.1 80.6 116.9 80.4 116.4 82.7 116.1 83.4 115.1 84.0 114.5 86.5 114.5 87.0 114.1 87.5 112.9 88.3 111.8 89.1 111.8 89.4 112.1 89.4 113.7 90.0 114.4M31.6 76.8 31.6 94.3 33.2 94.3 34.4 96.4 36.0 95.1 37.5 97.3 39.5 100.8 40.3 101.7M50.5 127.2 52.4 127.0 55.3 128.3 57.5 128.3 57.5 127.9 58.9 127.9 60.4 129.9 61.6 130.4 62.8 129.7 64.4 131.8 66.2 133.2M70.2 142.8 70.2 142.2 71.1 140.1 72.6 140.1 72.6 141.7M74.0 144.0 75.9 143.2 77.3 142.4M75.3 145.5 76.9 145.7M77.5 148.0 77.7 146.8M81.9 147.5 81.5 148.7M86.7 145.0 85.9 145.7 85.0 147.1 85.8 148.5 87.7 148.9 89.7 149.6 89.4 150.8 89.8 153.1M95.6 147.7 95.0 148.5 94.7 149.7 95.4 150.3 95.0 150.8M97.9 149.7 97.3 152.9M100.3 149.9 99.9 152.6M89.8 153.1 92.4 151.2 95.0 150.8 95.8 153.4 98.8 152.9 101.9 152.6 102.3 151.0M80.6 153.4 81.8 154.0 83.5 154.5 84.9 155.4 87.7 157.7M79.6 157.1 80.6 158.4 81.2 157.2 83.5 154.5M89.8 153.1 87.7 153.5 88.1 155.6 87.7 157.7 85.3 159.5 84.8 160.3 85.7 161.9 87.3 163.1 88.5 163.1 91.4 162.3 91.6 163.9 95.2 165.4 95.6 167.5 97.0 167.5 97.6 168.9 97.2 170.5M88.5 163.1 88.1 165.6 88.5 167.2 88.1 168.4 87.4 169.1M88.1 168.4 88.9 170.1 89.1 171.8 89.9 172.9M89.9 172.9 88.9 174.4 88.8 176.6 87.7 178.8 87.5 182.0 87.1 184.9 86.8 187.9 86.4 191.0 86.3 194.3 85.7 197.7 85.1 200.1 86.1 202.4 88.8 203.0M89.9 172.9 91.6 172.3 93.5 172.4 93.8 171.4 95.6 169.9 97.2 170.5M93.5 172.4 95.6 174.4 96.8 176.7 99.0 176.9 99.9 175.3M97.2 170.5 97.3 172.2 99.1 172.7 99.9 175.3M99.9 175.3 100.5 176.7 97.5 179.4 96.9 182.9M97.5 179.4 98.8 180.1 100.7 182.7M136.0 117.9 137.9 118.1 137.5 120.3 137.1 122.7M141.6 116.3 143.6 116.9 145.5 117.4M145.0 107.3 146.3 108.7 147.6 109.3 149.5 109.9 149.0 111.5 148.4 111.9 147.7 113.2 148.5 113.5 148.5 115.1 148.9 115.8M145.7 106.9 146.9 106.9 147.7 107.7M147.7 107.7 147.7 106.4 148.5 105.9 148.7 104.6M149.8 102.3 150.8 102.4M154.2 103.7 154.5 105.4 154.9 107.3M154.9 107.3 152.7 108.4 153.9 110.1 153.3 111.5 151.2 111.5 149.0 111.5M154.9 107.3 157.9 109.3 160.9 109.8 162.0 108.0 161.6 106.0 161.9 103.4M158.7 103.0 161.0 103.0 161.9 103.4M151.2 111.5 152.7 112.2 153.8 112.8 156.0 112.8 156.4 111.2 154.9 109.9M153.8 112.8 153.7 113.7M153.7 113.9 155.2 113.0 156.0 112.8 158.0 113.5 159.6 113.0 160.7 110.9 161.6 111.1 164.0 110.8 165.3 113.0 165.3 113.9 166.4 114.2M158.0 113.5 158.4 115.6 158.3 118.0M161.1 113.9 160.9 115.4 160.7 117.5 159.2 118.8 159.0 120.3M160.7 115.1 162.4 115.9 165.1 115.8M160.7 117.5 163.6 118.5 165.1 117.9M163.7 119.0 163.8 118.1 165.1 117.8M161.9 103.4 164.0 101.2 165.3 100.5 164.9 98.2 164.6 95.7 165.3 95.6M160.0 98.7 162.8 97.9 164.7 98.5M159.6 100.6 162.8 100.3 164.0 101.2M161.6 106.8 162.8 106.3 167.1 106.9 168.0 106.0M164.0 101.2 167.1 101.0 168.0 106.0M168.0 106.0 170.2 107.0 171.8 108.3 174.4 109.1 174.8 111.1 173.3 112.0M165.0 94.0 167.9 90.0 166.6 81.3 165.7 78.3 165.8 76.3M162.0 84.7 161.6 81.1 159.6 78.1 161.2 79.0 163.4 78.1 165.7 78.3M152.0 96.4 152.7 94.0 152.6 91.9 153.3 88.1 154.5 85.7 155.6 81.1 157.2 79.2 159.2 78.1 159.6 78.1M180.9 112.8 179.7 110.6 180.5 108.0 183.1 106.5 186.8 107.9 191.2 107.4 191.6 104.2 194.4 102.7 197.5 101.7 201.1 103.5 203.4 103.3 205.8 107.4 208.2 107.7 211.7 109.9M211.7 109.9 214.5 108.0 220.3 106.3 220.4 108.2 223.6 108.3 226.7 108.3 228.7 109.5 231.5 109.3 235.2 108.8 237.8 105.5 241.8 104.6 243.7 108.9 246.1 110.1 249.4 110.7 248.2 114.4 246.6 114.7 246.2 117.2M212.4 109.6 214.9 114.2 218.8 116.9 226.0 118.2 231.3 115.9 237.6 112.2 235.2 108.8M211.7 109.9 210.5 112.2 208.2 114.2 206.4 117.7 203.0 116.7 199.1 117.5 197.5 118.4 195.1 116.8 192.0 116.2 189.2 113.9 187.2 114.5 187.2 118.5 184.9 117.6M206.4 117.7 202.2 119.4 201.9 122.8 204.5 124.4 205.6 127.2 207.1 129.4 212.5 131.4 213.2 132.0 215.7 131.5 219.9 131.2 220.8 134.0 220.2 135.0 221.6 136.5 223.3 137.3 223.7 136.2 226.2 135.4 228.3 137.0M201.9 122.8 201.2 125.5 202.0 127.2 201.9 128.7 201.0 129.6 199.1 131.4 198.5 133.3 197.4 134.6M201.9 122.8 199.3 123.8 199.2 125.4 197.9 126.1 197.7 127.8 195.7 128.3 195.5 129.6 192.4 130.1 191.1 129.7 192.4 131.2 192.9 132.4 191.7 133.8M191.1 129.7 191.7 128.3 190.9 126.2 191.3 124.3 194.0 123.6 196.6 122.8 198.7 121.5 199.5 122.9M191.3 124.3 188.0 121.7 185.7 122.6M181.6 129.5 180.7 128.6 180.8 126.8 178.9 125.8 178.9 124.2 178.4 122.7 178.2 121.6 178.0 120.4 178.4 120.2M171.5 124.1 172.0 123.1 174.6 123.0 176.5 122.8 178.4 122.7M172.2 130.3 172.6 129.5 173.0 128.2 174.0 127.5 176.2 128.5 178.3 130.3 179.7 130.4 181.2 130.9M173.7 126.4 175.4 125.4 175.6 123.9M176.8 141.1 178.2 140.4 180.1 140.8 181.7 139.4 184.1 139.1 184.9 141.0M184.1 139.1 186.4 138.3 187.0 136.6 184.1 134.9M220.9 144.9 221.1 142.2 220.2 140.0 222.1 137.9 222.9 137.0M222.1 137.9 223.0 140.1 225.7 140.4 226.4 142.0 226.0 143.0 224.1 144.7M223.7 136.2 225.3 137.6 227.2 140.8 227.9 142.4 227.9 144.7 226.0 146.1M222.2 149.3 223.3 149.8 223.7 149.5M229.6 152.8 230.7 153.1 233.1 153.3 234.2 152.1 234.6 150.9 236.0 151.1M215.9 137.6 216.2 136.6 216.9 134.9 217.7 133.6 219.6 131.6M242.7 122.2 244.4 121.3M241.2 120.0 242.9 118.3 244.9 117.2 246.2 117.2M174.6 116.3 176.6 116.5 178.6 117.0 179.7 117.9 181.4 118.0M175.8 118.3 177.0 118.8 177.5 119.8 178.4 120.2M178.4 120.2 179.3 121.0 180.9 121.5M187.2 118.5 189.2 117.2 190.4 117.8 191.6 118.8 192.4 120.4 195.5 122.5M141.3 124.8 141.7 126.5 140.1 128.7 136.1 130.8M136.1 131.6 133.5 133.1 132.7 137.2 129.6 137.2M149.7 123.0 149.3 126.8 150.5 129.3 150.9 133.7 152.5 135.3M162.9 128.1 162.8 136.6 162.0 138.3M162.8 136.6 172.2 136.6M152.5 135.3 154.1 136.1 155.6 137.9 162.0 138.7 162.0 138.3M136.1 131.8 139.2 134.0 144.4 137.8 146.4 138.9 147.6 138.8 152.5 135.3M139.2 134.0 137.9 134.1 138.3 141.2 133.9 142.1 133.4 142.7M129.8 144.5 133.4 144.4 133.4 142.7 130.0 141.4M146.4 138.9 145.8 142.0 143.2 142.5 141.3 143.1 138.7 146.1 136.4 146.1 134.3 144.7M138.7 146.1 140.8 146.8 141.0 145.7 143.1 145.7 144.7 144.4M145.1 144.9 145.8 145.1 149.3 143.7 153.1 143.7 154.2 144.0M145.1 149.4 145.1 144.9M149.8 150.6 150.6 149.3 152.5 148.5 153.7 146.5 154.5 144.6 154.2 144.0M162.0 138.7 160.8 143.2 160.4 144.3 161.6 147.5M154.5 144.6 155.2 146.5 154.4 149.6M154.4 149.6 156.0 151.6 157.6 151.6 160.8 151.1 162.8 150.4 164.7 150.3M164.7 150.3 161.6 147.5M161.6 147.5 163.5 146.9 165.9 146.9 168.3 144.9 169.9 146.9M169.9 146.9 170.6 143.6 171.8 143.0 172.5 140.4M171.8 143.0 174.6 142.8 176.6 144.4M164.7 150.3 167.3 151.6 169.5 151.4 170.9 150.4 171.4 150.0M171.3 150.8 173.8 151.6 176.0 151.2 178.2 150.5 180.8 148.1 177.8 147.3 177.0 145.7M176.0 151.2 175.4 155.7M169.8 151.2 170.5 153.5 169.8 155.2 172.7 156.8 174.0 158.1M166.4 155.5 167.1 157.6 166.2 159.3 167.5 161.2M174.9 162.7 172.6 163.5 170.6 163.5M167.5 161.2 169.1 161.9 170.3 163.1 170.6 166.0 166.9 166.9M166.9 166.9 169.0 167.7 168.9 169.7 167.7 172.6M160.4 167.5 163.0 168.7 165.1 167.6 166.9 166.9M167.7 172.6 165.9 172.4 163.5 174.5 162.8 175.5 158.8 174.6 158.8 177.8 156.7 178.1M158.8 174.6 158.8 172.2 159.6 168.9 161.6 168.4 163.0 168.7M152.3 168.3 153.7 168.0 159.6 168.9M160.4 164.8 160.4 163.1 162.0 163.1 162.0 164.8M152.6 159.1 156.0 159.1 156.8 160.7 158.0 160.7 160.2 159.9 160.4 163.1 162.0 163.1 163.5 163.8 165.1 163.9 166.3 164.8 167.3 161.0M152.5 158.4 153.3 158.1 155.8 156.0 157.1 153.6 157.6 151.6M151.8 157.6 153.7 156.2 154.4 152.7 150.7 152.6M168.3 176.4 168.2 175.2M168.5 128.3 170.6 130.0M254.3 156.5 254.4 161.6M241.0 161.8 241.8 161.9" fill="none" stroke="#6c92be" stroke-width="0.45" stroke-linejoin="round"/><path d="M43.6 122.8L45.8 125.0L50.2 120.6" fill="none" stroke="#178a17" stroke-width="2.3"/><path d="M43.6 122.8L45.8 125.0L50.2 120.6" fill="none" stroke="#22d322" stroke-width="1.4"/><path d="M46.5 126.0L48.7 128.2L53.1 123.8" fill="none" stroke="#178a17" stroke-width="2.3"/><path d="M46.5 126.0L48.7 128.2L53.1 123.8" fill="none" stroke="#22d322" stroke-width="1.4"/><path d="M78.7 121.1L80.9 123.3L85.3 118.9" fill="none" stroke="#178a17" stroke-width="2.3"/><path d="M78.7 121.1L80.9 123.3L85.3 118.9" fill="none" stroke="#22d322" stroke-width="1.4"/><path d="M75.8 116.9L78.0 119.1L82.4 114.7" fill="none" stroke="#178a17" stroke-width="2.3"/><path d="M75.8 116.9L78.0 119.1L82.4 114.7" fill="none" stroke="#22d322" stroke-width="1.4"/><path d="M138.2 104.4L140.4 106.6L144.8 102.2" fill="none" stroke="#178a17" stroke-width="2.3"/><path d="M138.2 104.4L140.4 106.6L144.8 102.2" fill="none" stroke="#22d322" stroke-width="1.4"/><path d="M141.8 110.2L144.0 112.4L148.4 108.0" fill="none" stroke="#178a17" stroke-width="2.3"/><path d="M141.8 110.2L144.0 112.4L148.4 108.0" fill="none" stroke="#22d322" stroke-width="1.4"/><path d="M143.8 106.0L146.0 108.2L150.4 103.8" fill="none" stroke="#178a17" stroke-width="2.3"/><path d="M143.8 106.0L146.0 108.2L150.4 103.8" fill="none" stroke="#22d322" stroke-width="1.4"/><path d="M149.7 107.2L151.9 109.4L156.3 105.0" fill="none" stroke="#178a17" stroke-width="2.3"/><path d="M149.7 107.2L151.9 109.4L156.3 105.0" fill="none" stroke="#22d322" stroke-width="1.4"/><path d="M162.4 175.6L164.6 177.8L169.0 173.4" fill="none" stroke="#178a17" stroke-width="2.3"/><path d="M162.4 175.6L164.6 177.8L169.0 173.4" fill="none" stroke="#22d322" stroke-width="1.4"/><path d="M164.2 123.2L166.4 125.4L170.8 121.0" fill="none" stroke="#178a17" stroke-width="2.3"/><path d="M164.2 123.2L166.4 125.4L170.8 121.0" fill="none" stroke="#22d322" stroke-width="1.4"/><path d="M163.8 95.2L166.0 97.4L170.4 93.0" fill="none" stroke="#178a17" stroke-width="2.3"/><path d="M163.8 95.2L166.0 97.4L170.4 93.0" fill="none" stroke="#22d322" stroke-width="1.4"/><path d="M196.5 126.0L198.7 128.2L203.1 123.8" fill="none" stroke="#178a17" stroke-width="2.3"/><path d="M196.5 126.0L198.7 128.2L203.1 123.8" fill="none" stroke="#22d322" stroke-width="1.4"/><path d="M202.4 145.8L204.6 148.0L209.0 143.6" fill="none" stroke="#178a17" stroke-width="2.3"/><path d="M202.4 145.8L204.6 148.0L209.0 143.6" fill="none" stroke="#22d322" stroke-width="1.4"/><path d="M231.6 149.9L233.8 152.1L238.2 147.7" fill="none" stroke="#178a17" stroke-width="2.3"/><path d="M231.6 149.9L233.8 152.1L238.2 147.7" fill="none" stroke="#22d322" stroke-width="1.4"/><path d="M221.9 153.5L224.1 155.7L228.5 151.3" fill="none" stroke="#178a17" stroke-width="2.3"/><path d="M221.9 153.5L224.1 155.7L228.5 151.3" fill="none" stroke="#22d322" stroke-width="1.4"/><path d="M233.8 127.8L236.0 130.0L240.4 125.6" fill="none" stroke="#178a17" stroke-width="2.3"/><path d="M233.8 127.8L236.0 130.0L240.4 125.6" fill="none" stroke="#22d322" stroke-width="1.4"/><path d="M240.2 122.6L242.4 124.8L246.8 120.4" fill="none" stroke="#178a17" stroke-width="2.3"/><path d="M240.2 122.6L242.4 124.8L246.8 120.4" fill="none" stroke="#22d322" stroke-width="1.4"/><path d="M247.2 125.1L249.4 127.3L253.8 122.9" fill="none" stroke="#178a17" stroke-width="2.3"/><path d="M247.2 125.1L249.4 127.3L253.8 122.9" fill="none" stroke="#22d322" stroke-width="1.4"/><path d="M249.4 184.1L251.6 186.3L256.0 181.9" fill="none" stroke="#178a17" stroke-width="2.3"/><path d="M249.4 184.1L251.6 186.3L256.0 181.9" fill="none" stroke="#22d322" stroke-width="1.4"/><path d="M254.4 186.9L256.6 189.1L261.0 184.7" fill="none" stroke="#178a17" stroke-width="2.3"/><path d="M254.4 186.9L256.6 189.1L261.0 184.7" fill="none" stroke="#22d322" stroke-width="1.4"/><path d="M73.4 126.2L78.2 131.0M78.2 126.2L73.4 131.0" fill="none" stroke="#b81a1a" stroke-width="2.3"/><path d="M73.4 126.2L78.2 131.0M78.2 126.2L73.4 131.0" fill="none" stroke="#f22a2a" stroke-width="1.6"/><path d="M84.5 115.8L89.3 120.6M89.3 115.8L84.5 120.6" fill="none" stroke="#b81a1a" stroke-width="2.3"/><path d="M84.5 115.8L89.3 120.6M89.3 115.8L84.5 120.6" fill="none" stroke="#f22a2a" stroke-width="1.6"/><path d="M62.6 136.6L67.4 141.4M67.4 136.6L62.6 141.4" fill="none" stroke="#b81a1a" stroke-width="2.3"/><path d="M62.6 136.6L67.4 141.4M67.4 136.6L62.6 141.4" fill="none" stroke="#f22a2a" stroke-width="1.6"/><path d="M104.1 171.3L108.9 176.1M108.9 171.3L104.1 176.1" fill="none" stroke="#b81a1a" stroke-width="2.3"/><path d="M104.1 171.3L108.9 176.1M108.9 171.3L104.1 176.1" fill="none" stroke="#f22a2a" stroke-width="1.6"/><path d="M136.2 121.2L141.0 126.0M141.0 121.2L136.2 126.0" fill="none" stroke="#b81a1a" stroke-width="2.3"/><path d="M136.2 121.2L141.0 126.0M141.0 121.2L136.2 126.0" fill="none" stroke="#f22a2a" stroke-width="1.6"/></svg></div>
<div class="bot"></div>
</body></html>
